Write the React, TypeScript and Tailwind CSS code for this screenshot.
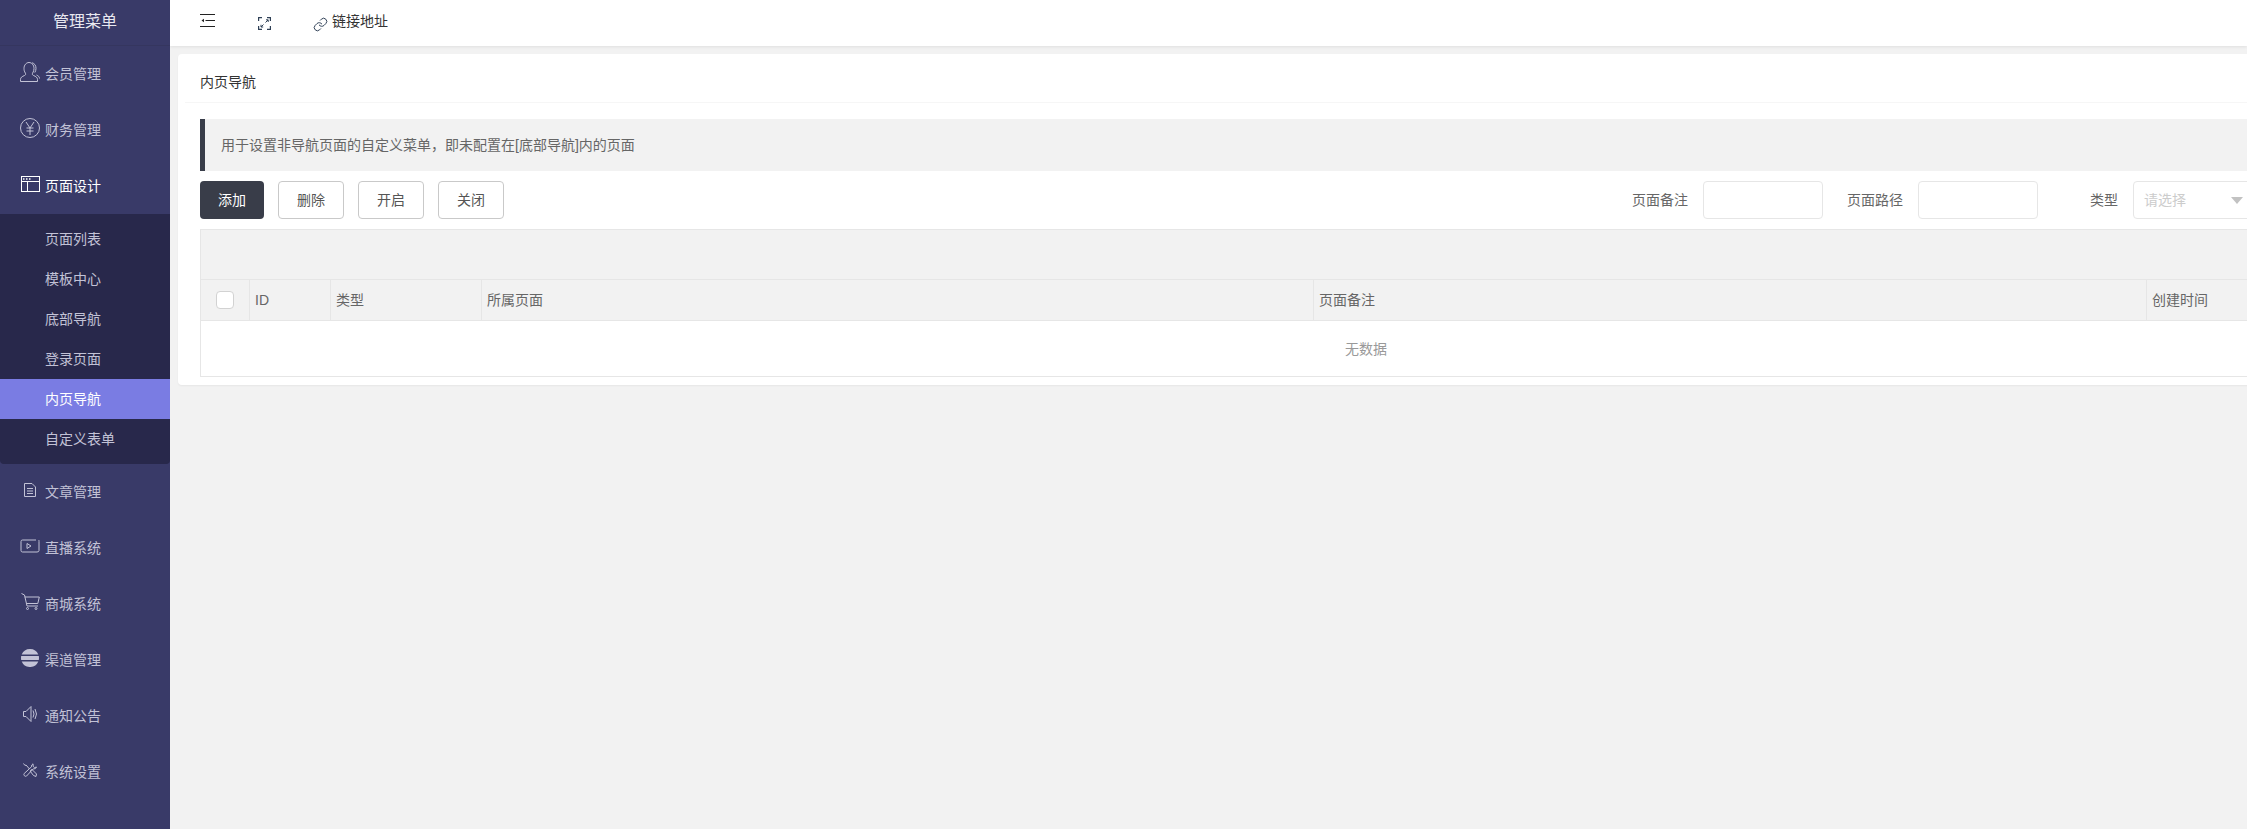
import type { ReactNode } from "react";
import { Link } from "lucide-react";

const stroke = { fill: "none", stroke: "currentColor", strokeWidth: 1 };

const icons: Record<string, ReactNode> = {
  user: (
    <svg width="20" height="20" viewBox="0 0 20 20" {...stroke}>
      <path d="M.5 19.500v-2c0-2 1.500-3 4-4 1.200-.5 1.500-1.500.8-2.500C4.300 9.500 4 8 4 6.500 4 3 6.300.5 9 .5s5 2.500 5 6c0 1.500-.4 3-1.300 4.500-.7 1-.4 2 .8 2.500 2.500 1 4 2 4 4v2z" />
      <path d="M12 .8c2.500.5 4 2.700 4 5.500 0 1.500-.4 3-1.200 4.200M16.500 13c1.800.8 3 1.800 3 3.500" />
    </svg>
  ),
  yuan: (
    <svg width="20" height="20" viewBox="0 0 20 20" {...stroke}>
      <circle cx="10" cy="10" r="9.500" />
      <path d="M6 4l4 6 4-6M6.500 10h7M6.500 13h7M10 10v7" />
    </svg>
  ),
  layout: (
    <svg width="19" height="16" viewBox="0 0 19 16" fill="none" stroke="#fff" strokeWidth="1">
      <rect x=".5" y=".5" width="18" height="15" />
      <path d="M.5 5.500h18M6.500 5.500v10" />
      <path d="M2 3h1.500M5 3h1.500M8 3h1.500" strokeWidth="1.500" />
    </svg>
  ),
  doc: (
    <svg width="12" height="14" viewBox="0 0 12 14" {...stroke}>
      <path d="M.5.500h7.500l3.500 3.500v9.500h-11z" />
      <path d="M3 5.500h6M3 8h6M3 10.500h6" />
    </svg>
  ),
  video: (
    <svg width="20" height="14" viewBox="0 0 20 14" {...stroke}>
      <path d="M16 1H2.500Q1 1 1 2.500v9Q1 13 2.500 13H17q2 0 2-1.500V2.500Q19 1 18.500 1" />
      <path d="M7 4.500v5l4-2.500z" />
    </svg>
  ),
  cart: (
    <svg width="19" height="18" viewBox="0 0 19 18" {...stroke}>
      <path d="M.5.500l3 1.500 2.500 11h11M3.800 4h14.500l-1.500 6.500H5.300" />
      <circle cx="6.500" cy="15.500" r="1" />
      <circle cx="15" cy="15.500" r="1" />
    </svg>
  ),
  channel: (
    <svg width="18" height="18" viewBox="0 0 18 18" fill="currentColor">
      <path d="M9 0a9 9 0 0 1 8.300 5.500H.7A9 9 0 0 1 9 0zM0 9q0-1 .2-2h17.600q.4 2 0 4H.2Q0 10 0 9zM.7 12.500h16.600A9 9 0 0 1 .7 12.500z" />
    </svg>
  ),
  speaker: (
    <svg width="14" height="16" viewBox="0 0 14 16" {...stroke}>
      <path d="M.5 5.500h2.500L8 .5v15l-5-5H.5z" />
      <path d="M10 4.500q2 3.500 0 7M12 3q3 5 0 10" />
    </svg>
  ),
  tools: (
    <svg width="14" height="14" viewBox="0 0 14 14" {...stroke}>
      <path d="M.5.500l1.500 2 1-.5 3.500 4M7.800 7.200l-.8.8 3.500 4.500 2.500 1 .5-2.500-4.500-4.500z" />
      <path d="M10 .8q-1.800 1-1.500 3L1.200 10.500a1.800 1.800 0 0 0 2.300 2.600l6.700-7.200q2.500.5 3.300-1.900l-2 .6-1.300-1.200z" />
    </svg>
  ),
};

const topMenus = [
  { label: "会员管理", icon: "user" },
  { label: "财务管理", icon: "yuan" },
];
const bottomMenus = [
  { label: "文章管理", icon: "doc" },
  { label: "直播系统", icon: "video" },
  { label: "商城系统", icon: "cart" },
  { label: "渠道管理", icon: "channel" },
  { label: "通知公告", icon: "speaker" },
  { label: "系统设置", icon: "tools" },
];
const subMenus = ["页面列表", "模板中心", "底部导航", "登录页面", "内页导航", "自定义表单"];

function MenuItem({ label, icon, active }: { label: string; icon: string; active?: boolean }) {
  return (
    <div className={`flex h-14 items-center ${active ? "text-white" : "text-[#c2c2d6]"}`}>
      <span className="mb-[5px] ml-5 flex w-5 justify-center">{icons[icon]}</span>
      <span className="ml-[5px]">{label}</span>
    </div>
  );
}

function Sidebar() {
  return (
    <aside className="h-full w-[170px] shrink-0 bg-[#393a68] text-sm">
      <div className="flex h-[46px] items-center justify-center border-b border-[#35365f] pb-[2px] text-base text-[#e8e8f0]">
        管理菜单
      </div>
      {topMenus.map((m) => (
        <MenuItem key={m.label} {...m} />
      ))}
      <MenuItem label="页面设计" icon="layout" active />
      <div className="h-[250px] rounded-b-sm bg-[#28284b] py-[5px]">
        {subMenus.map((s) => (
          <div
            key={s}
            className={`flex h-10 items-center pl-[45px] ${s === "内页导航" ? "bg-[#7a7ce3] text-white" : "text-[#c2c2d6]"}`}
          >
            {s}
          </div>
        ))}
      </div>
      {bottomMenus.map((m) => (
        <MenuItem key={m.label} {...m} />
      ))}
    </aside>
  );
}

function TopBar() {
  return (
    <header className="flex h-[46px] w-full items-center bg-white pl-[30px] text-sm text-[#333] shadow-[0_1px_3px_rgba(0,0,0,0.08)]">
      <svg width="15" height="14" viewBox="0 0 15 14" fill="none" stroke="#222" strokeWidth="1" className="mb-[4px]">
        <path d="M0 .5h15M5.500 6.500h9.500M0 12.500h15" strokeWidth="1.200" />
        <path d="M1.500 6.500l2.500-1.800v3.600z" fill="#222" stroke="none" />
      </svg>
      <svg width="13" height="13" viewBox="0 0 13 13" fill="none" stroke="#2f4056" strokeWidth="1.200" className="ml-[43px] mt-[1px]">
        <path d="M4 .6H.6V4M9 .6h3.400V4M4 12.400H.6V9M9 12.400h3.400V9" />
        <path d="M7.500 5.500l2.500-2.500M8 2.800h2.200V5M5.500 7.500L3 10M3 7.800V10h2.200" strokeWidth="1" />
      </svg>
      <Link size={15} strokeWidth={1.6} color="#2f4056" className="ml-[42px] mt-[2px]" />
      <span className="mb-[4px] ml-[4px]">链接地址</span>
    </header>
  );
}

function Filter({ label, className }: { label: string; className?: string }) {
  return (
    <div className={`flex items-center ${className ?? ""}`}>
      <span className="mr-[15px] text-[#666]">{label}</span>
      <div className="h-[38px] w-[120px] rounded-sm border border-[#e6e6e6] bg-white" />
    </div>
  );
}

const columns = ["", "ID", "类型", "所属页面", "页面备注", "创建时间"];

function DataTable() {
  return (
    <div className="mt-[10px] w-[2332px] border border-[#e6e6e6] bg-white text-[#666]">
      <div className="h-[50px] border-b border-[#e6e6e6] bg-[#f2f2f2]" />
      <div className="grid h-[41px] grid-cols-[49px_81px_151px_832px_833px_1fr] border-b border-[#e6e6e6] bg-[#f2f2f2]">
        {columns.map((c, i) => (
          <div key={i} className={`flex items-center pl-[5px] ${i < 5 ? "border-r border-[#e6e6e6]" : ""}`}>
            {i === 0 ? <span className="ml-[10px] h-[18px] w-[18px] rounded-sm border border-[#d2d2d2] bg-white" /> : c}
          </div>
        ))}
      </div>
      <div className="flex h-[55px] items-center justify-center text-[#999]">无数据</div>
    </div>
  );
}

export default function App() {
  return (
    <div className="flex h-screen w-full overflow-hidden bg-[#f2f2f2] font-['Liberation_Sans','Noto_Sans_CJK_SC',sans-serif] text-sm">
      <Sidebar />
      <main className="min-w-0 flex-1 overflow-hidden">
        <TopBar />
        <section className="ml-2 mt-2 h-[331px] w-[2400px] rounded-sm bg-white shadow-[0_1px_2px_rgba(0,0,0,0.05)]">
          <div className="mx-[7px] flex h-[49px] items-center border-b border-[#f6f6f6] pl-[15px] pt-[7px] text-[#333]">内页导航</div>
          <div className="pl-[22px] pt-[16px]">
            <div className="flex h-[52px] items-center border-l-[5px] border-[#393d49] bg-[#f2f2f2] pb-[1px] pl-[16px] text-[#666]">
              用于设置非导航页面的自定义菜单，即未配置在[底部导航]内的页面
            </div>
            <div className="mt-[10px] flex w-[2053px] items-center justify-between">
              <div className="flex gap-[14px] text-[#555]">
                <button className="h-[38px] w-16 rounded-sm bg-[#393d49] text-white">添加</button>
                <button className="h-[38px] w-[66px] rounded-sm border border-[#c9c9c9] bg-white">删除</button>
                <button className="h-[38px] w-[66px] rounded-sm border border-[#c9c9c9] bg-white">开启</button>
                <button className="h-[38px] w-[66px] rounded-sm border border-[#c9c9c9] bg-white">关闭</button>
              </div>
              <div className="flex items-center">
                <Filter label="页面备注" />
                <Filter label="页面路径" className="ml-[24px]" />
                <span className="ml-[52px] mr-[15px] text-[#666]">类型</span>
                <div className="flex h-[38px] w-[120px] items-center justify-between rounded-sm border border-[#e6e6e6] bg-white pl-[10px] pr-[9px] text-[#ccc]">
                  <span>请选择</span>
                  <svg width="12" height="7" viewBox="0 0 12 7" fill="#c2c2c2">
                    <path d="M0 0h12L6 7z" />
                  </svg>
                </div>
              </div>
            </div>
            <DataTable />
          </div>
        </section>
      </main>
    </div>
  );
}
